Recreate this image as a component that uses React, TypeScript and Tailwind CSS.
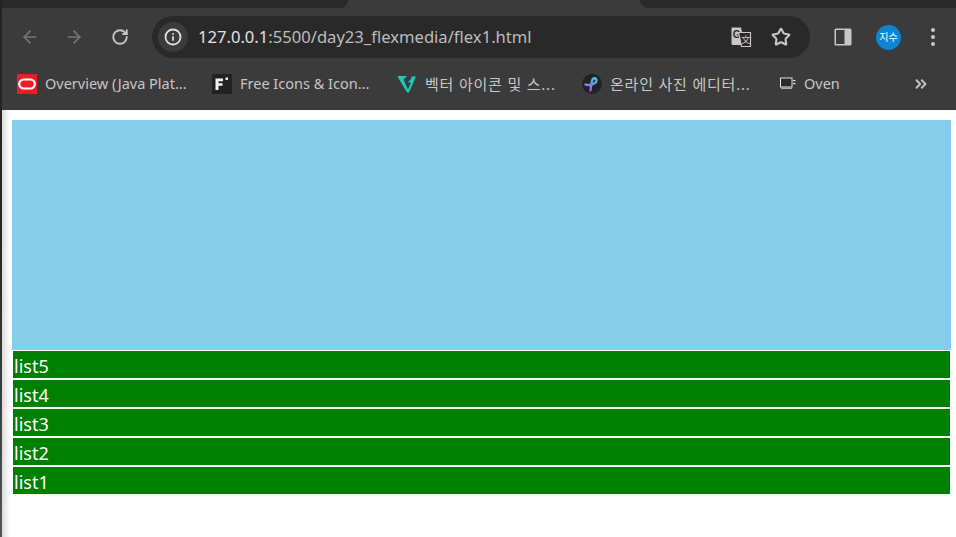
import { ArrowLeft, ArrowRight, ChevronsRight, Info, RotateCw, Star } from 'lucide-react';

const lists = ['list5', 'list4', 'list3', 'list2', 'list1'];

function OracleIcon() {
    return (
        <svg width="20" height="20" viewBox="0 0 20 20" className="shrink-0">
            <rect width="20" height="20" fill="#ee1c25" />
            <rect x="2.2" y="5.5" width="15.6" height="9" rx="4.5" fill="none" stroke="#fff" strokeWidth="2.2" />
        </svg>
    );
}

function FreeIcon() {
    return (
        <svg width="20" height="20" viewBox="0 0 20 20" className="shrink-0">
            <rect width="20" height="20" fill="#222" />
            <path d="M3.5 4.5H11V7.2H6.5V9.2H10.5V11.8H6.5V16H3.5Z" fill="#f2f2f2" />
            <rect x="13.5" y="3.5" width="2.5" height="2.5" fill="#e8e8e8" />
        </svg>
    );
}

function VectorIcon() {
    return (
        <svg width="20" height="20" viewBox="0 0 20 20" className="shrink-0">
            <path d="M1.5 2H10L6.5 5.5 11 15.5 14 8.5H10.5L14 5 14.5 2.5H19L12.5 17.5C11.8 19 10.2 19 9.5 17.5L1 3.5C0.6 2.7 0.8 2 1.5 2Z" fill="#1cc8b8" />
        </svg>
    );
}

function RibbonIcon() {
    return (
        <svg width="20" height="20" viewBox="0 0 20 20" className="shrink-0">
            <defs>
                <linearGradient id="ribbon" x1="0" y1="0" x2="0" y2="1">
                    <stop offset="0" stopColor="#3fc4e8" />
                    <stop offset="1" stopColor="#a45be0" />
                </linearGradient>
            </defs>
            <circle cx="10" cy="10" r="10" fill="#222" />
            <path d="M3.5 10.5C7 12 14.5 10 14.5 6.5C14.5 3.5 10.8 3.5 10 7C9.5 10 8.8 13 8.5 16.5" fill="none" stroke="url(#ribbon)" strokeWidth="2.4" strokeLinecap="round" />
        </svg>
    );
}

function OvenIcon() {
    return (
        <svg width="16" height="14" viewBox="0 0 16 14" className="shrink-0">
            <rect x="0.5" y="1" width="11.5" height="9" fill="#2a2a2a" stroke="#e4e4e4" strokeWidth="1" />
            <rect x="1" y="10.5" width="11" height="1.5" fill="#aaa" />
            <rect x="13" y="3" width="2.5" height="1.2" fill="#ddd" />
            <rect x="13" y="6" width="2.5" height="1.2" fill="#ddd" />
        </svg>
    );
}

function TranslateIcon() {
    return (
        <svg width="22" height="22" viewBox="0 0 22 22" className="shrink-0">
            <path d="M1.5 1.5H11L15 19H3C2 19 1.5 18.5 1.5 17.5Z" fill="#c7c7c7" />
            <text x="2.8" y="12" fontSize="10" fontWeight="700" fill="#292929" fontFamily="Liberation Sans, sans-serif">G</text>
            <path d="M8.5 6.5H20.5V20.5H11.5Z" fill="#292929" stroke="#c7c7c7" strokeWidth="1.2" />
            <text x="11" y="17" fontSize="9.5" fill="#c7c7c7" fontFamily="Noto Sans CJK SC, sans-serif">文</text>
        </svg>
    );
}

function SidePanelIcon() {
    return (
        <svg width="18" height="18" viewBox="0 0 18 18" className="shrink-0">
            <rect x="0.5" y="0.5" width="17" height="17" rx="1.5" fill="#c7c7c7" />
            <rect x="2" y="2" width="8.5" height="14" fill="#3b3b3b" />
        </svg>
    );
}

function Bookmark({ icon, label, width, korean }: { icon: React.ReactNode; label: string; width: string; korean?: boolean }) {
    return (
        <div className="flex items-center gap-2 shrink-0">
            {icon}
            <span className={`whitespace-nowrap text-[#c7c7c7] ${korean ? 'text-[15px] tracking-[0.8px]' : 'text-[14.5px]'} ${width}`}>{label}</span>
        </div>
    );
}

export default function App() {
    return (
        <div className="flex h-[537px] w-[956px] overflow-hidden bg-white font-['Noto_Sans','Noto_Sans_CJK_KR',sans-serif]">
            {/* Window edge */}
            <div className="w-[2px] shrink-0 bg-gradient-to-b from-[#222] via-[#2a2a2a] to-[#555]" />

            <div className="flex min-w-0 flex-1 flex-col">
                {/* Browser chrome */}
                <header className="h-[110px] shrink-0 bg-[#3b3b3b]">
                    <div className="flex h-2 justify-between">
                        <div className="w-[346px] rounded-br-lg bg-[#292929]" />
                        <div className="w-[316px] rounded-bl-lg bg-[#292929]" />
                    </div>

                    <div className="flex h-[42px] mt-2 items-center pl-[17px]">
                        <ArrowLeft className="w-5 h-5 ml-px text-[#777]" />
                        <ArrowRight className="w-5 h-5 ml-6 text-[#777]" />
                        <RotateCw className="w-[18px] h-[18px] ml-[27px] text-[#c7c7c7]" strokeWidth={2.4} />
                        <div className="ml-[23px] flex h-[42px] w-[658px] items-center rounded-full bg-[#292929] pl-[6px] pr-[19px]">
                            <div className="flex h-[30px] w-[30px] items-center justify-center rounded-full bg-[#3b3b3b]">
                                <Info className="w-[18px] h-[18px] text-[#e0e0e0]" strokeWidth={2.4} />
                            </div>
                            <span className="ml-[10px] flex-1 whitespace-nowrap text-[16.6px] text-[#e3e3e3]">
                                127.0.0.1<span className="text-[#bdbdbd]">:5500/day23_flexmedia/flex1.html</span>
                            </span>
                            <TranslateIcon />
                            <Star className="ml-[19px] w-5 h-5 text-[#c7c7c7]" strokeWidth={2.5} />
                        </div>
                        <div className="ml-[24px]">
                            <SidePanelIcon />
                        </div>
                        <div className="ml-[24px] flex h-[25px] w-[25px] items-center justify-center rounded-full bg-[#0b86d4] text-[10px] text-white">
                            지수
                        </div>
                        <div className="ml-[30px] flex flex-col gap-[3px]">
                            <span className="h-1 w-1 rounded-full bg-[#c7c7c7]" />
                            <span className="h-1 w-1 rounded-full bg-[#c7c7c7]" />
                            <span className="h-1 w-1 rounded-full bg-[#c7c7c7]" />
                        </div>
                    </div>

                    <div className="flex mt-2 h-9 items-center gap-[25px] pl-[15px]">
                        <Bookmark icon={<OracleIcon />} label="Overview (Java Plat..." width="w-[142px]" />
                        <Bookmark icon={<FreeIcon />} label="Free Icons & Icon..." width="w-[132px]" />
                        <Bookmark icon={<VectorIcon />} label="벡터 아이콘 및 스..." width="w-[132px]" korean />
                        <Bookmark icon={<RibbonIcon />} label="온라인 사진 에디터..." width="w-[145px]" korean />
                        <Bookmark icon={<OvenIcon />} label="Oven" width="w-[84px]" />
                        <ChevronsRight className="w-[18px] h-[18px] -ml-[1px] text-[#c7c7c7]" strokeWidth={2.4} />
                    </div>
                </header>

                {/* Page */}
                <main className="flex-1 bg-[linear-gradient(to_right,#dcdcdc,#ffffff_8px)] pl-[10px] pr-[5px] pt-[10px]">
                    <div className="h-[230px] bg-[#87ceeb]" />
                    <ul className="flex flex-col gap-[2px] px-px pt-px">
                        {lists.map((item) => (
                            <li key={item} className="h-[27px] bg-[#008000] pl-px text-lg leading-[31px] text-white">
                                {item}
                            </li>
                        ))}
                    </ul>
                </main>
            </div>
        </div>
    );
}
